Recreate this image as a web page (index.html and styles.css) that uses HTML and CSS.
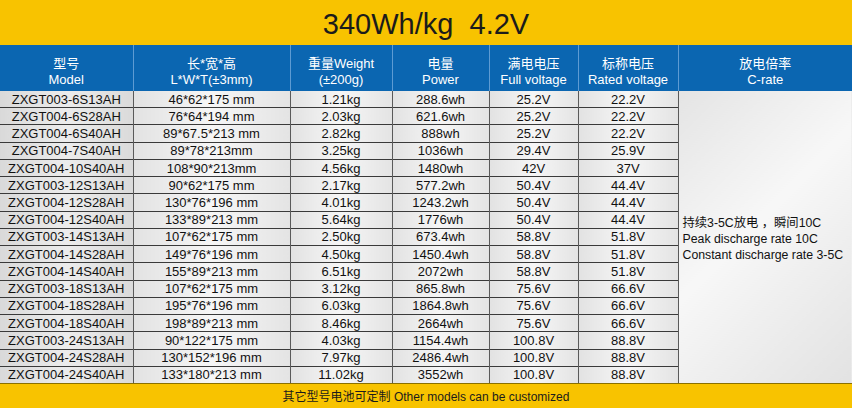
FILE: index.html
```html
<!DOCTYPE html>
<html lang="zh">
<head>
  <meta charset="UTF-8" />
  <title>340Wh/kg 4.2V</title>
  <link rel="stylesheet" href="styles.css">
</head>
<body>
  <div class="sheet">
    <div class="title">340Wh/kg&nbsp;&nbsp;4.2V</div>
    <table class="spec">
      <colgroup>
        <col style="width:133px"><col style="width:157px"><col style="width:102px"><col style="width:97px">
        <col style="width:89px"><col style="width:100px"><col style="width:174px">
      </colgroup>
      <thead>
        <tr>
          <th>型号<br>Model</th>
          <th>长*宽*高<br>L*W*T(±3mm)</th>
          <th>重量Weight<br>(±200g)</th>
          <th>电量<br>Power</th>
          <th>满电电压<br>Full voltage</th>
          <th>标称电压<br>Rated voltage</th>
          <th>放电倍率<br>C-rate</th>
        </tr>
      </thead>
      <tbody>
        <tr><td>ZXGT003-6S13AH</td><td>46*62*175 mm</td><td>1.21kg</td><td>288.6wh</td><td>25.2V</td><td>22.2V</td>
          <td class="rate" rowspan="17">持续3-5C放电 ，瞬间10C<br>Peak discharge rate 10C<br>Constant discharge rate 3-5C</td></tr>
        <tr><td>ZXGT004-6S28AH</td><td>76*64*194 mm</td><td>2.03kg</td><td>621.6wh</td><td>25.2V</td><td>22.2V</td></tr>
        <tr><td>ZXGT004-6S40AH</td><td>89*67.5*213 mm</td><td>2.82kg</td><td>888wh</td><td>25.2V</td><td>22.2V</td></tr>
        <tr><td>ZXGT004-7S40AH</td><td>89*78*213mm</td><td>3.25kg</td><td>1036wh</td><td>29.4V</td><td>25.9V</td></tr>
        <tr><td>ZXGT004-10S40AH</td><td>108*90*213mm</td><td>4.56kg</td><td>1480wh</td><td>42V</td><td>37V</td></tr>
        <tr><td>ZXGT003-12S13AH</td><td>90*62*175 mm</td><td>2.17kg</td><td>577.2wh</td><td>50.4V</td><td>44.4V</td></tr>
        <tr><td>ZXGT004-12S28AH</td><td>130*76*196 mm</td><td>4.01kg</td><td>1243.2wh</td><td>50.4V</td><td>44.4V</td></tr>
        <tr><td>ZXGT004-12S40AH</td><td>133*89*213 mm</td><td>5.64kg</td><td>1776wh</td><td>50.4V</td><td>44.4V</td></tr>
        <tr><td>ZXGT003-14S13AH</td><td>107*62*175 mm</td><td>2.50kg</td><td>673.4wh</td><td>58.8V</td><td>51.8V</td></tr>
        <tr><td>ZXGT004-14S28AH</td><td>149*76*196 mm</td><td>4.50kg</td><td>1450.4wh</td><td>58.8V</td><td>51.8V</td></tr>
        <tr><td>ZXGT004-14S40AH</td><td>155*89*213 mm</td><td>6.51kg</td><td>2072wh</td><td>58.8V</td><td>51.8V</td></tr>
        <tr><td>ZXGT003-18S13AH</td><td>107*62*175 mm</td><td>3.12kg</td><td>865.8wh</td><td>75.6V</td><td>66.6V</td></tr>
        <tr><td>ZXGT004-18S28AH</td><td>195*76*196 mm</td><td>6.03kg</td><td>1864.8wh</td><td>75.6V</td><td>66.6V</td></tr>
        <tr><td>ZXGT004-18S40AH</td><td>198*89*213 mm</td><td>8.46kg</td><td>2664wh</td><td>75.6V</td><td>66.6V</td></tr>
        <tr><td>ZXGT003-24S13AH</td><td>90*122*175 mm</td><td>4.03kg</td><td>1154.4wh</td><td>100.8V</td><td>88.8V</td></tr>
        <tr><td>ZXGT004-24S28AH</td><td>130*152*196 mm</td><td>7.97kg</td><td>2486.4wh</td><td>100.8V</td><td>88.8V</td></tr>
        <tr><td>ZXGT004-24S40AH</td><td>133*180*213 mm</td><td>11.02kg</td><td>3552wh</td><td>100.8V</td><td>88.8V</td></tr>
      </tbody>
    </table>
    <div class="footer">其它型号电池可定制 Other models can be customized</div>
  </div>
</body>
</html>
```

FILE: styles.css
```css
body {
  margin: 0;
  padding: 0;
  width: 852px;
  height: 408px;
  overflow: hidden;
  font-family: "Liberation Sans", Arial, "Noto Sans CJK SC", sans-serif;
  color: #111;
}

.sheet {
  display: flex;
  flex-direction: column;
  height: 408px;
  background: #f8c300;
}

.title {
  flex: none;
  height: 45px;
  line-height: 48px;
  text-align: center;
  font-size: 29px;
  color: #1b1b1b;
  background: #f8c300;
}

.spec {
  flex: none;
  width: 852px;
  table-layout: fixed;
  border-collapse: collapse;
}

.spec th {
  height: 38px;
  padding: 8px 0 0;
  background: #0b66b1;
  color: #fff;
  font-weight: normal;
  font-size: 13px;
  line-height: 16px;
  border-left: 1px solid #5d9bd3;
}

.spec th:first-child {
  border-left: none;
}

.spec td {
  height: 16.24px;
  padding: 0;
  font-size: 13px;
  line-height: 15px;
  text-align: center;
  white-space: nowrap;
  background: linear-gradient(to right, #e2e2e2, #f6f6f6 50%, #e4e4e4);
  border-top: 1px solid #3a3a3a;
  border-left: 1px solid #5a5a5a;
}

.spec tbody tr:first-child td {
  border-top: none;
}

.spec td:first-child {
  border-left: none;
  background: linear-gradient(to right, #d9d9d9, #ececec 50%, #dadada);
}

.spec td.rate {
  text-align: left;
  padding: 4px 0 0 4px;
  font-size: 12.3px;
  line-height: 16px;
  background: linear-gradient(135deg, #e4e4e4, #f7f7f7 45%, #e2e2e2);
  border-left: 1px solid #5a5a5a;
}

.footer {
  flex: 1;
  display: flex;
  align-items: center;
  justify-content: center;
  font-size: 12px;
  color: #1b1b1b;
  border-top: 1px solid #8a7000;
}
```
